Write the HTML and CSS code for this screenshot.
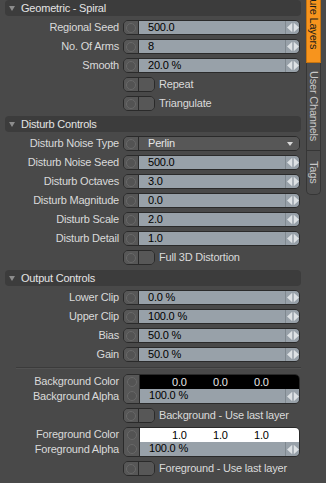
FILE: index.html
```html
<html lang="en">
<head>
  <meta charset="UTF-8">
  <title>Texture Layers - Geometric Spiral</title>
  <link rel="stylesheet" href="styles.css">
</head>
<body>
  <div class="panel">
    <div class="main">

      <section class="group">
        <div class="group-head"><span class="caret"></span>Geometric - Spiral</div>
        <div class="row">
          <span class="label">Regional Seed</span>
          <div class="field"><span class="key"><i></i></span><span class="value">500.0</span><span class="spin"></span></div>
        </div>
        <div class="row">
          <span class="label">No. Of Arms</span>
          <div class="field"><span class="key"><i></i></span><span class="value">8</span><span class="spin"></span></div>
        </div>
        <div class="row">
          <span class="label">Smooth</span>
          <div class="field"><span class="key"><i></i></span><span class="value">20.0 %</span><span class="spin"></span></div>
        </div>
        <div class="row">
          <span class="label"></span>
          <div class="check"><div class="toggle"><span class="key"><i></i></span><span class="knob"></span></div><span class="check-text">Repeat</span></div>
        </div>
        <div class="row">
          <span class="label"></span>
          <div class="check"><div class="toggle"><span class="key"><i></i></span><span class="knob"></span></div><span class="check-text">Triangulate</span></div>
        </div>
      </section>

      <section class="group">
        <div class="group-head"><span class="caret"></span>Disturb Controls</div>
        <div class="row">
          <span class="label">Disturb Noise Type</span>
          <div class="field"><span class="key"><i></i></span><span class="value select">Perlin<b class="drop"></b></span></div>
        </div>
        <div class="row">
          <span class="label">Disturb Noise Seed</span>
          <div class="field"><span class="key"><i></i></span><span class="value">500.0</span><span class="spin"></span></div>
        </div>
        <div class="row">
          <span class="label">Disturb Octaves</span>
          <div class="field"><span class="key"><i></i></span><span class="value">3.0</span><span class="spin"></span></div>
        </div>
        <div class="row">
          <span class="label">Disturb Magnitude</span>
          <div class="field"><span class="key"><i></i></span><span class="value">0.0</span><span class="spin"></span></div>
        </div>
        <div class="row">
          <span class="label">Disturb Scale</span>
          <div class="field"><span class="key"><i></i></span><span class="value">2.0</span><span class="spin"></span></div>
        </div>
        <div class="row">
          <span class="label">Disturb Detail</span>
          <div class="field"><span class="key"><i></i></span><span class="value">1.0</span><span class="spin"></span></div>
        </div>
        <div class="row">
          <span class="label"></span>
          <div class="check"><div class="toggle"><span class="key"><i></i></span><span class="knob"></span></div><span class="check-text">Full 3D Distortion</span></div>
        </div>
      </section>

      <section class="group">
        <div class="group-head"><span class="caret"></span>Output Controls</div>
        <div class="row">
          <span class="label">Lower Clip</span>
          <div class="field"><span class="key"><i></i></span><span class="value">0.0 %</span><span class="spin"></span></div>
        </div>
        <div class="row">
          <span class="label">Upper Clip</span>
          <div class="field"><span class="key"><i></i></span><span class="value">100.0 %</span><span class="spin"></span></div>
        </div>
        <div class="row">
          <span class="label">Bias</span>
          <div class="field"><span class="key"><i></i></span><span class="value">50.0 %</span><span class="spin"></span></div>
        </div>
        <div class="row">
          <span class="label">Gain</span>
          <div class="field"><span class="key"><i></i></span><span class="value">50.0 %</span><span class="spin"></span></div>
        </div>
      </section>

      <div class="divider"></div>

      <section class="group">
        <div class="color-row">
          <div class="color-labels">
            <span class="label">Background Color</span>
            <span class="label">Background Alpha</span>
          </div>
          <div class="color-field">
            <div class="color-keys"><span class="key"><i></i></span><span class="key"><i></i></span></div>
            <div class="color-body">
              <div class="swatch dark"><span>0.0</span><span>0.0</span><span>0.0</span></div>
              <div class="alpha"><span class="value">100.0 %</span><span class="spin"></span></div>
            </div>
          </div>
        </div>
        <div class="row">
          <span class="label"></span>
          <div class="check"><div class="toggle"><span class="key"><i></i></span><span class="knob"></span></div><span class="check-text">Background - Use last layer</span></div>
        </div>
        <div class="color-row">
          <div class="color-labels">
            <span class="label">Foreground Color</span>
            <span class="label">Foreground Alpha</span>
          </div>
          <div class="color-field">
            <div class="color-keys"><span class="key"><i></i></span><span class="key"><i></i></span></div>
            <div class="color-body">
              <div class="swatch light"><span>1.0</span><span>1.0</span><span>1.0</span></div>
              <div class="alpha"><span class="value">100.0 %</span><span class="spin"></span></div>
            </div>
          </div>
        </div>
        <div class="row">
          <span class="label"></span>
          <div class="check"><div class="toggle"><span class="key"><i></i></span><span class="knob"></span></div><span class="check-text">Foreground - Use last layer</span></div>
        </div>
      </section>

    </div>

    <div class="tabs">
      <div class="tab active"><span>Texture Layers</span></div>
      <div class="tab"><span>User Channels</span></div>
      <div class="tab last"><span>Tags</span></div>
    </div>
  </div>

  <script>
    // spinner arrows are the same everywhere, so stamp them in once
    const arrows = '<svg width="12" height="9" viewBox="0 0 12 9"><polygon points="5,0 0,4.5 5,9" fill="#dde1e4"/><rect x="5.5" y="0" width="1" height="9" fill="#b9c0c5"/><polygon points="7,0 12,4.5 7,9" fill="#dde1e4"/></svg>';
    document.querySelectorAll('.spin').forEach(el => el.innerHTML = arrows);
  </script>
</body>
</html>
```

FILE: styles.css
```css
* {
  box-sizing: border-box;
  margin: 0;
  padding: 0;
}

body {
  background: #494949;
  font-family: "Liberation Sans", Arial, sans-serif;
  font-size: 11px;
  letter-spacing: -0.2px;
  color: #dadada;
  width: 326px;
  height: 483px;
  overflow: hidden;
}

.panel {
  display: flex;
  height: 483px;
}

.main {
  width: 306px;
  padding: 0 5px;
}

.group {
  display: flex;
  flex-direction: column;
  gap: 4px;
  margin-bottom: 5px;
}

.group-head {
  height: 16px;
  background: #3c3c3c;
  border-radius: 4px;
  display: flex;
  align-items: center;
  padding-left: 4px;
  color: #e4e4e4;
}

.caret {
  width: 0;
  height: 0;
  border-left: 3px solid transparent;
  border-right: 3px solid transparent;
  border-top: 5px solid #8c8c8c;
  margin-right: 6px;
}

.row {
  display: grid;
  grid-template-columns: 114px 177px;
  column-gap: 4px;
  height: 15px;
  align-items: center;
}

.label {
  text-align: right;
  white-space: nowrap;
  line-height: 15px;
}

/* numeric field: key button, value, spinner */
.field {
  display: flex;
  height: 15px;
  border: 1px solid #2a2a2a;
  border-radius: 5px;
  overflow: hidden;
}

.key {
  width: 15px;
  flex: none;
  background: #575757;
  border-right: 1px solid #2a2a2a;
  display: flex;
  align-items: center;
  justify-content: center;
}

.key i {
  width: 10px;
  height: 10px;
  border-radius: 50%;
  background: #535353;
  border: 1px solid #686868;
}

.value {
  flex: 1;
  background: #98a1a9;
  color: #000;
  padding-left: 9px;
  line-height: 13px;
  white-space: nowrap;
}

.value.select {
  background: #575757;
  color: #e6e6e6;
  display: flex;
  justify-content: space-between;
  align-items: center;
  padding-right: 6px;
}

.drop {
  width: 0;
  height: 0;
  border-left: 3px solid transparent;
  border-right: 3px solid transparent;
  border-top: 4px solid #d8d8d8;
}

.spin {
  width: 14px;
  flex: none;
  background: #98a1a9;
  border-left: 1px solid #7f888f;
  display: flex;
  align-items: center;
  justify-content: center;
}

.spin svg {
  display: block;
}

/* toggle checkbox */
.check {
  display: flex;
  align-items: center;
  gap: 4px;
}

.toggle {
  display: flex;
  width: 32px;
  height: 15px;
  border: 1px solid #2a2a2a;
  border-radius: 5px;
  overflow: hidden;
}

.toggle .knob {
  flex: 1;
  background: #575757;
}

.check-text {
  white-space: nowrap;
  line-height: 15px;
}

.divider {
  height: 2px;
  margin: 0 0 5px 11px;
  border-top: 1px solid #3b3b3b;
  border-bottom: 1px solid #525252;
}

/* color swatch + alpha pair */
.color-row {
  display: grid;
  grid-template-columns: 114px 177px;
  column-gap: 4px;
  height: 30px;
}

.color-labels {
  display: flex;
  flex-direction: column;
}

.color-field {
  display: flex;
  border: 1px solid #2a2a2a;
  border-radius: 5px;
  overflow: hidden;
}

.color-keys {
  display: flex;
  flex-direction: column;
  border-right: 1px solid #2a2a2a;
}

.color-keys .key {
  height: 14px;
  border-right: none;
}

.color-body {
  flex: 1;
  display: flex;
  flex-direction: column;
}

.swatch {
  height: 14px;
  display: flex;
  padding-left: 32px;
  line-height: 14px;
}

.swatch span {
  width: 41px;
}

.swatch.dark {
  background: #000;
  color: #e8e8e8;
}

.swatch.light {
  background: #fff;
  color: #000;
}

.alpha {
  flex: 1;
  display: flex;
}

/* side tabs */
.tabs {
  width: 15px;
  margin-top: -25px;
  display: flex;
  flex-direction: column;
  align-self: flex-start;
}

.tab {
  writing-mode: vertical-rl;
  background: #4d4d4d;
  border: 1px solid #363636;
  border-top: none;
  color: #c8c8c8;
  padding: 8px 0;
  line-height: 13px;
  text-align: center;
}

.tab.active {
  background: #f7941d;
  color: #1a1a1a;
  border-color: #c57410;
  padding: 5px 0 13px;
}

.tab.last {
  padding: 10px 0 11px;
  border-radius: 0 0 5px 5px;
}
```
